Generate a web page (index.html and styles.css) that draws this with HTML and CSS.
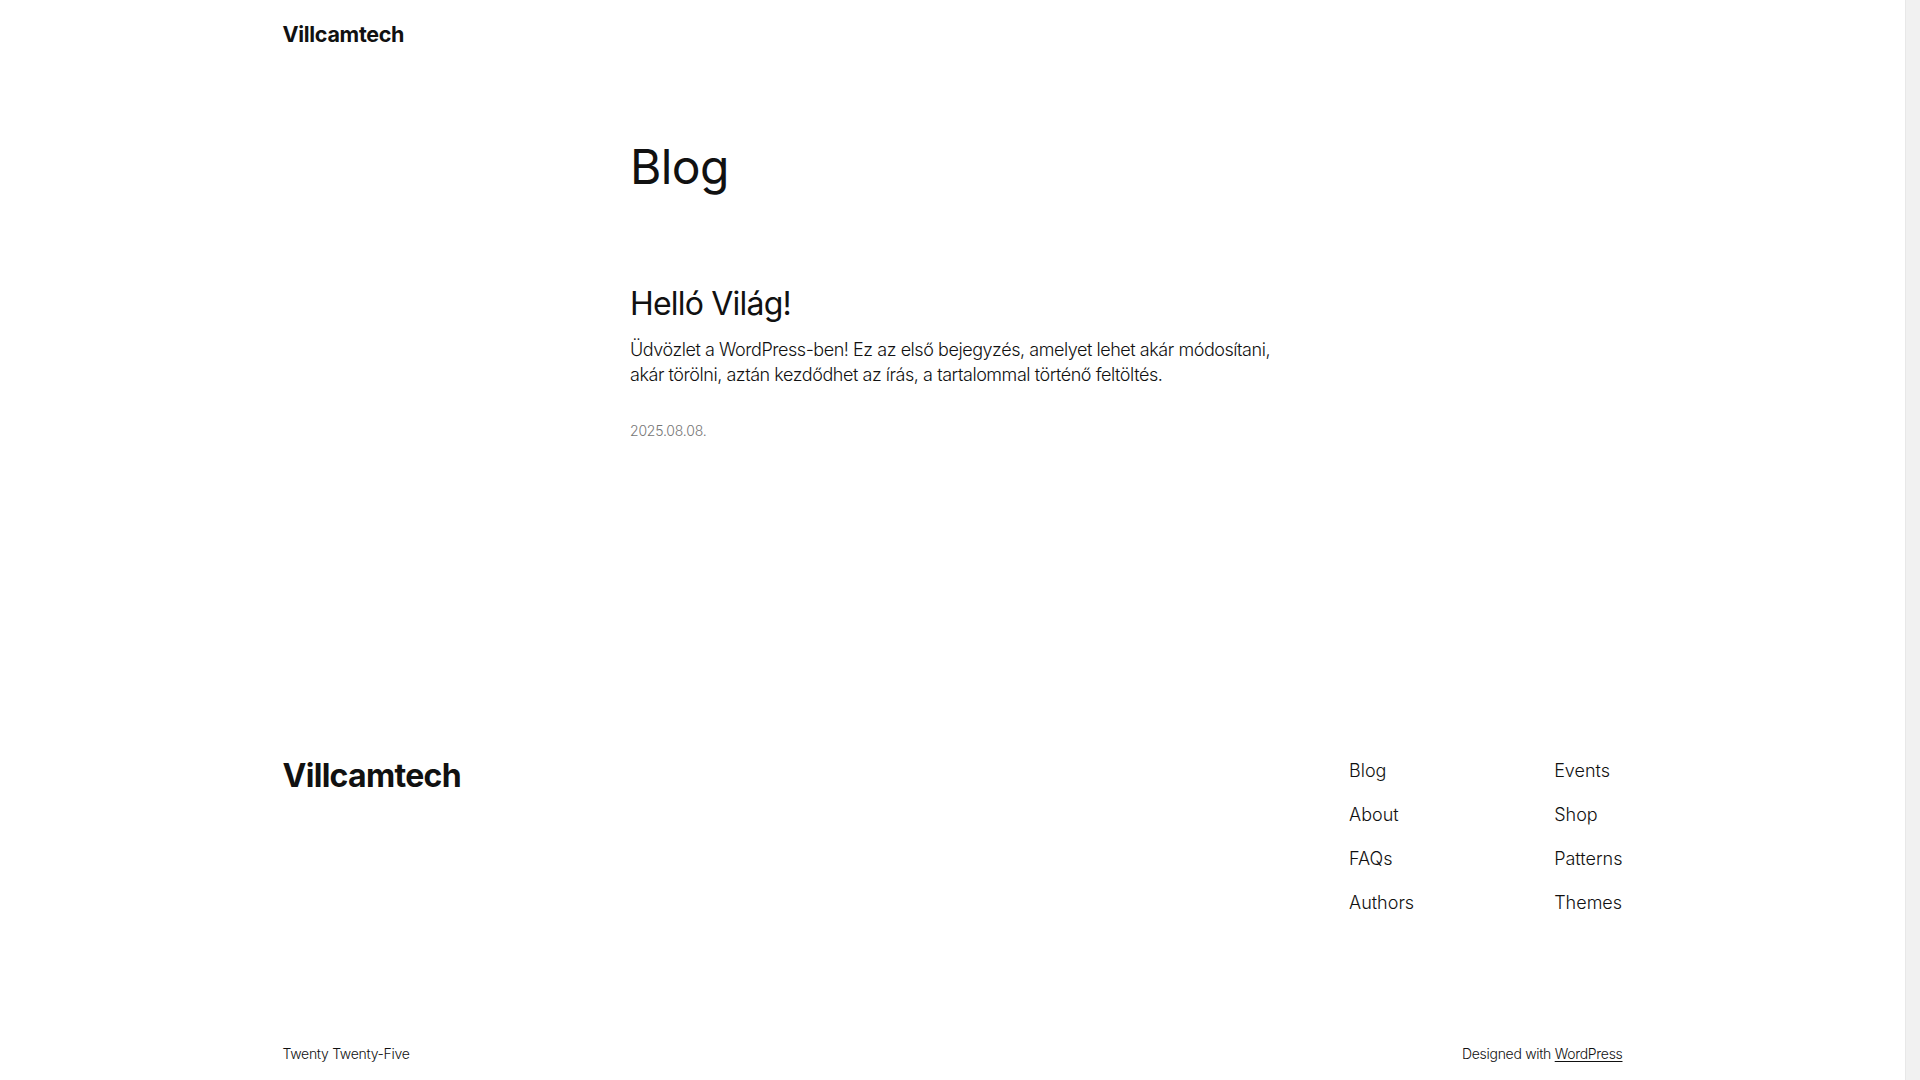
FILE: index.html
```html
<!DOCTYPE html>
<html lang="hu">
<head>
<meta charset="utf-8">
<title>Villcamtech</title>
<link rel="stylesheet" href="styles.css">
</head>
<body>
<div class="page">
  <header class="site-header">
    <div class="wide">
      <a class="site-title" href="#">Villcamtech</a>
    </div>
  </header>
  <main class="site-main">
    <div class="content">
      <h1 class="page-title">Blog</h1>
      <article class="post">
        <h2 class="post-title"><a href="#">Helló Világ!</a></h2>
        <p class="post-excerpt">Üdvözlet a WordPress-ben! Ez az első bejegyzés, amelyet lehet akár módosítani, akár törölni, aztán kezdődhet az írás, a tartalommal történő feltöltés.</p>
        <div class="post-date">2025.08.08.</div>
      </article>
    </div>
  </main>
  <footer class="site-footer">
    <div class="wide">
      <div class="footer-top">
        <a class="footer-title" href="#">Villcamtech</a>
        <div class="footer-navs">
          <nav class="footer-nav">
            <a href="#">Blog</a>
            <a href="#">About</a>
            <a href="#">FAQs</a>
            <a href="#">Authors</a>
          </nav>
          <nav class="footer-nav">
            <a href="#">Events</a>
            <a href="#">Shop</a>
            <a href="#">Patterns</a>
            <a href="#">Themes</a>
          </nav>
        </div>
      </div>
      <div class="footer-bottom">
        <span>Twenty Twenty-Five</span>
        <span>Designed with <a class="wp-link" href="#">WordPress</a></span>
      </div>
    </div>
  </footer>
</div>
<div class="scrollbar"><div class="scrollbar-thumb"></div></div>
</body>
</html>
```

FILE: styles.css
```css
html, body {
  margin: 0;
  padding: 0;
  background: #ffffff;
}

html {
  overflow: hidden;
}

body {
  font-family: "Inter", "Liberation Sans", sans-serif;
  font-weight: 300;
  font-size: 18px;
  line-height: 1.4;
  color: #111111;
}

.page {
  margin-right: 15px;
}

a {
  color: inherit;
  text-decoration: none;
}

.wide {
  max-width: 1340px;
  margin: 0 auto;
}

.site-header {
  padding: 22px 0 20px;
}

.site-header .wide {
  display: flex;
  align-items: center;
}

.site-title {
  font-size: 21.5px;
  font-weight: 700;
  line-height: 1.2;
  letter-spacing: -0.3px;
}

.site-main {
  padding-top: 72px;
}

.content {
  width: 645px;
  margin: 0 auto;
}

.page-title {
  margin: 0;
  font-size: 48px;
  font-weight: 400;
  line-height: 1.125;
  letter-spacing: -0.6px;
}

.post {
  margin-top: 92px;
  display: flex;
  flex-direction: column;
}

.post-title {
  margin: 0;
  font-size: 32px;
  font-weight: 400;
  line-height: 1.125;
  letter-spacing: -0.8px;
}

.post-excerpt {
  margin: 15px 0 0;
  font-size: 18px;
  line-height: 1.4;
  letter-spacing: -0.45px;
}

.post-date {
  margin-top: 34px;
  font-size: 14px;
  line-height: 1.4;
  color: #767676;
  letter-spacing: -0.2px;
}

.site-footer {
  margin-top: 317px;
  padding-bottom: 50px;
}

.footer-top {
  display: flex;
  justify-content: space-between;
  align-items: flex-start;
}

.footer-title {
  font-size: 32px;
  font-weight: 700;
  line-height: 1.125;
  letter-spacing: -0.7px;
}

.footer-navs {
  display: flex;
  gap: 140px;
}

.footer-nav {
  display: flex;
  flex-direction: column;
  gap: 19px;
}

.footer-nav a {
  font-size: 18px;
  line-height: 1.4;
  letter-spacing: 0;
}

.footer-bottom {
  margin-top: 128px;
  display: flex;
  justify-content: space-between;
  font-size: 14px;
  line-height: 1.4;
  letter-spacing: -0.3px;
}

.wp-link {
  text-decoration: underline;
  text-underline-offset: 2px;
}

.scrollbar {
  position: fixed;
  top: 0;
  right: 0;
  width: 15px;
  height: 100vh;
  background: #f1f1f1;
  border-left: 1px solid #e8e8e8;
  box-sizing: border-box;
}

.scrollbar-thumb {
  margin: 2px 3px;
  height: calc(100vh - 40px);
  border-radius: 4px;
  background: #f1f1f1;
}
```
